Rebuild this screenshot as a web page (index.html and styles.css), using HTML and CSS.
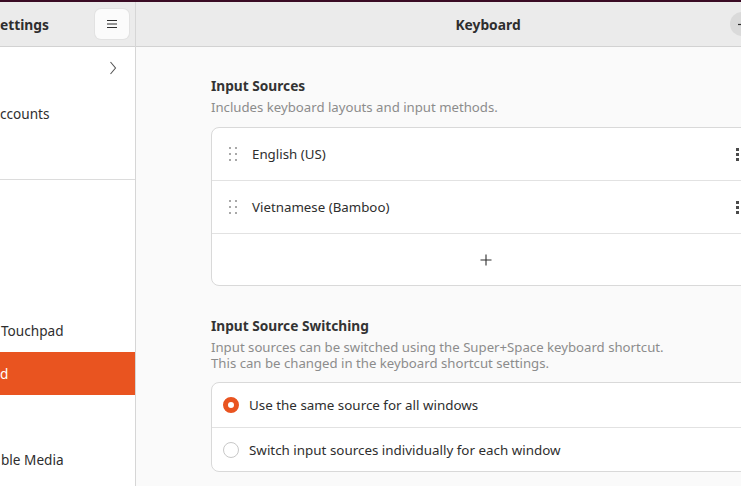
FILE: index.html
```html
<!DOCTYPE html>
<html>
<head>
<meta charset="utf-8">
<link rel="stylesheet" href="styles.css">
</head>
<body>
<div class="app">
  <div class="topstrip"></div>
  <div class="window">
    <aside class="sidebar">
      <div class="sb-header">
        <span class="sb-title">ettings</span>
        <button class="menu-btn" aria-label="Menu">
          <svg width="12" height="10" viewBox="0 0 12 10"><path d="M1 1.5h10M1 5h10M1 8.5h10" stroke="#2e2e2e" stroke-width="1.2"/></svg>
        </button>
      </div>
      <div class="sb-list">
        <div class="sb-row"><span class="sb-label"></span>
          <svg class="chev" width="8" height="14" viewBox="0 0 8 14"><path d="M1.5 1l5 6-5 6" fill="none" stroke="#555" stroke-width="1.1"/></svg>
        </div>
        <div class="sb-row"><span class="sb-label">ccounts</span></div>
        <div class="sb-row"><span class="sb-label"></span></div>
        <div class="sb-sep"></div>
        <div class="sb-row b"><span class="sb-label"></span></div>
        <div class="sb-row b"><span class="sb-label"></span></div>
        <div class="sb-row b"><span class="sb-label"></span></div>
        <div class="sb-row b"><span class="sb-label touch">Touchpad</span></div>
        <div class="sb-row b selected"><span class="sb-label">d</span></div>
        <div class="sb-row b"><span class="sb-label"></span></div>
        <div class="sb-row b"><span class="sb-label media">ble Media</span></div>
      </div>
    </aside>
    <main class="main">
      <div class="main-header">
        <span class="main-title">Keyboard</span>
        <div class="wm-buttons">
          <span class="wm-btn"><svg width="10" height="10" viewBox="0 0 10 10"><path d="M1 5.5h8" stroke="#2e2e2e" stroke-width="1.2"/></svg></span>
          <span class="wm-btn"></span>
          <span class="wm-btn"></span>
        </div>
      </div>
      <div class="content">
        <section class="group">
          <h2 class="group-title">Input Sources</h2>
          <p class="group-desc">Includes keyboard layouts and input methods.</p>
          <div class="listbox">
            <div class="src-row">
              <span class="handle"><i></i><i></i><i></i><i></i><i></i><i></i></span>
              <span class="src-name">English (US)</span>
              <span class="kebab"><i></i><i></i><i></i></span>
            </div>
            <div class="src-row">
              <span class="handle"><i></i><i></i><i></i><i></i><i></i><i></i></span>
              <span class="src-name">Vietnamese (Bamboo)</span>
              <span class="kebab"><i></i><i></i><i></i></span>
            </div>
            <div class="add-row">
              <svg width="12" height="12" viewBox="0 0 12 12"><path d="M6 0.5v11M0.5 6h11" stroke="#2e2e2e" stroke-width="1.1"/></svg>
            </div>
          </div>
        </section>
        <section class="group second">
          <h2 class="group-title">Input Source Switching</h2>
          <p class="group-desc">Input sources can be switched using the Super+Space keyboard shortcut.<br>This can be changed in the keyboard shortcut settings.</p>
          <div class="listbox">
            <div class="radio-row">
              <span class="radio checked"></span>
              <span class="radio-label">Use the same source for all windows</span>
            </div>
            <div class="radio-row">
              <span class="radio"></span>
              <span class="radio-label">Switch input sources individually for each window</span>
            </div>
          </div>
        </section>
      </div>
    </main>
  </div>
</div>
</body>
</html>
```

FILE: styles.css
```css
* { box-sizing: border-box; margin: 0; padding: 0; }
html, body { width: 741px; height: 486px; overflow: hidden; }
body {
  font-family: "Noto Sans", "Open Sans", sans-serif;
  font-size: 13.3px;
  color: #323232;
  background: #fafafa;
}
.app { width: 840px; display: flex; flex-direction: column; }
.topstrip { height: 2px; background: #3a0b24; }
.window { display: flex; height: 484px; }

.sidebar {
  width: 136px;
  flex: none;
  background: #ffffff;
  border-right: 1px solid #d6d6d6;
  overflow: hidden;
  display: flex;
  flex-direction: column;
}
.sb-header {
  height: 45px;
  flex: none;
  background: #ebebeb;
  border-bottom: 1px solid #d2d2d2;
  display: flex;
  align-items: center;
  justify-content: space-between;
  padding-right: 6px;
}
.sb-title { font-weight: 700; font-size: 13.8px; color: #2e2e2e; }
.menu-btn {
  width: 34px; height: 30px;
  border: none;
  border-radius: 6px;
  background: #fbfbfb;
  box-shadow: 0 0 0 1px #e2e2e2;
  display: flex; align-items: center; justify-content: center;
}
.sb-list { display: flex; flex-direction: column; }
.sb-row {
  height: 44px;
  flex: none;
  display: flex;
  align-items: center;
  justify-content: space-between;
  padding-right: 18px;
  white-space: nowrap;
}
.sb-row.b { height: 43px; }
.sb-label { font-size: 13.6px; color: #2e2e2e; }
.sb-label.touch { padding-left: 1px; }
.sb-label.media { padding-left: 1px; }
.chev { margin-top: -2px; }
.sb-sep { height: 1px; background: #dcdcdc; }
.sb-row.selected { background: #e95420; }
.sb-row.selected .sb-label { color: #ffffff; }

.main { flex: 1; display: flex; flex-direction: column; }
.main-header {
  height: 45px;
  flex: none;
  background: #ebebeb;
  border-bottom: 1px solid #d2d2d2;
  display: flex;
  align-items: center;
  justify-content: center;
  position: relative;
}
.main-title { font-weight: 700; font-size: 13.8px; color: #2e2e2e; }
.wm-buttons {
  position: absolute;
  right: 10px; top: 10px;
  display: flex; gap: 14px;
}
.wm-btn {
  width: 24px; height: 24px; border-radius: 50%;
  background: #dadada;
  display: flex; align-items: center; justify-content: center;
}

.content { padding: 30px 75px 0 75px; display: flex; flex-direction: column; }
.group-title { font-size: 13.7px; font-weight: 700; color: #333; line-height: 18px; }
.group-desc { font-size: 13.2px; color: #8c8c8c; line-height: 16px; margin-top: 4px; }
.listbox {
  margin-top: 12px;
  background: #ffffff;
  border: 1px solid #d9d9d9;
  border-radius: 8px;
  display: flex; flex-direction: column;
  overflow: hidden;
}
.src-row {
  height: 53px;
  display: flex; align-items: center;
  padding-left: 17px; padding-right: 25px;
  border-bottom: 1px solid #e2e2e2;
}
.handle {
  width: 9px; display: grid;
  grid-template-columns: 2px 2px; column-gap: 4px; row-gap: 4px;
  margin-right: 14px;
}
.handle i { width: 2px; height: 2px; background: #a9a9a9; display: block; }
.src-name { flex: 1; font-size: 13.3px; color: #2e2e2e; }
.kebab { display: flex; flex-direction: column; gap: 2px; }
.kebab i { width: 3px; height: 3px; background: #4a4a4a; display: block; }
.add-row { height: 51px; display: flex; align-items: center; justify-content: center; padding-right: 4px; }

.group.second { margin-top: 31px; }
.group.second .listbox { margin-top: 11px; }
.radio-row {
  height: 44px; display: flex; align-items: center;
  padding-left: 11px;
}
.radio-row + .radio-row { border-top: 1px solid #e2e2e2; }
.radio {
  width: 16px; height: 16px; border-radius: 50%;
  border: 1px solid #c8c8c8; background: #fff;
  margin-right: 10px; flex: none;
}
.radio.checked { border: 5px solid #e95420; background: #fff; }
.radio-label { font-size: 13.4px; color: #2e2e2e; }
```
